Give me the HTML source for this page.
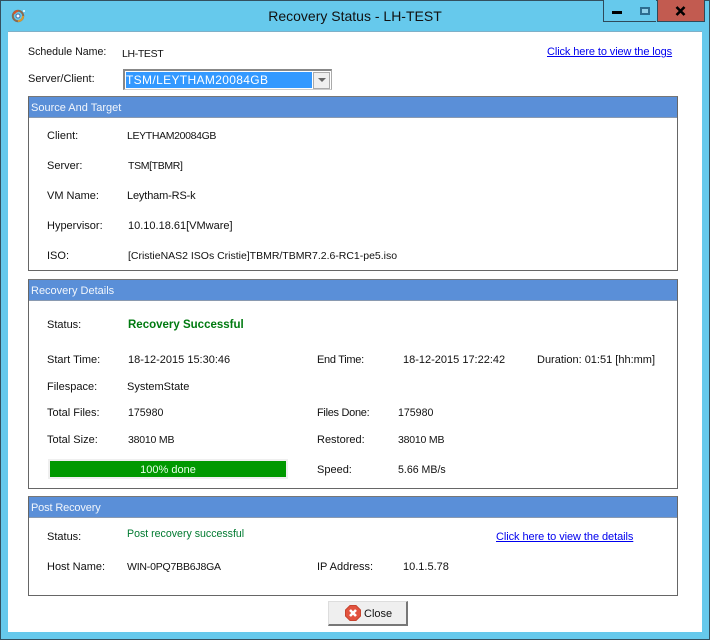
<!DOCTYPE html>
<html>
<head>
<meta charset="utf-8">
<style>
html,body{margin:0;padding:0;width:710px;height:640px;overflow:hidden;background:#66c9ec}
body{position:relative;font-family:"Liberation Sans",sans-serif;font-size:11px;color:#111}
.t{position:absolute;line-height:14px;white-space:nowrap}
.n{font-size:10.5px;letter-spacing:-.35px}
.box{position:absolute;left:28px;width:648px;border:1px solid #666;border-top:1px solid #777;background:#fff}
.hd{position:absolute;left:0;top:0;right:0;height:20px;background:#5a8fd8;border-bottom:1px solid #8a9ab0;color:#f2f6fc;line-height:22px;padding-left:2px}
a{color:#0000ee;text-decoration:underline}
</style>
</head>
<body>
<div style="position:absolute;left:0;top:0;width:710px;height:640px;box-sizing:border-box;border:1px solid #33505f"></div>
<div style="position:absolute;left:8px;top:31px;width:694px;height:600px;background:#fff;border-top:1px solid #7fb0c8"></div>

<svg style="position:absolute;left:11px;top:8px" width="16" height="16" viewBox="0 0 16 16">
<circle cx="7" cy="8" r="5.2" fill="none" stroke="#8a6a50" stroke-width="2"/>
<path d="M3 6A5 5 0 0 1 7 3" fill="none" stroke="#d8552a" stroke-width="2"/>
<path d="M7 13A5 5 0 0 0 12 8" fill="none" stroke="#d89a30" stroke-width="2"/>
<circle cx="7" cy="8" r="2" fill="#fff" stroke="#4a6fa8"/>
<circle cx="13" cy="3" r="1" fill="#fff"/>
</svg>
<div class="t" style="left:0;width:710px;top:7px;line-height:18px;text-align:center;font-size:14px;color:#111;">Recovery Status - LH-TEST</div>

<!-- window buttons -->
<div style="position:absolute;left:603px;top:0;width:27px;height:21px;border:1px solid #2e4a5a;border-top:0;background:#66c9ec"></div>
<div style="position:absolute;left:612px;top:11px;width:10px;height:3px;background:#000"></div>
<div style="position:absolute;left:631px;top:0;width:25px;height:21px;border-bottom:1px solid #2e4a5a;background:#66c9ec"></div>
<div style="position:absolute;left:640px;top:7px;width:10px;height:8px;box-sizing:border-box;border:2px solid #2d6d90;background:#8fd0ea"></div>
<div style="position:absolute;left:657px;top:0;width:46px;height:21px;box-sizing:content-box;border:1px solid #2e4a5a;border-top:0;background:#c25b50"></div>
<svg style="position:absolute;left:675px;top:6px" width="11" height="10" viewBox="0 0 11 10"><path d="M1.5 1L9.5 9M9.5 1L1.5 9" stroke="#000" stroke-width="2.6"/></svg>

<div class="t" style="left:28px;top:45px;font-size:10.6px">Schedule Name:</div>
<div class="t n" style="left:122px;top:47px">LH-TEST</div>
<a class="t" style="left:547px;top:45px;letter-spacing:-.1px">Click here to view the logs</a>
<div class="t" style="left:28px;top:72px">Server/Client:</div>

<!-- combo -->
<div style="position:absolute;left:123px;top:69px;width:209px;height:21px;box-sizing:border-box;border:1px solid #777;border-top:2px solid #888;border-left:2px solid #888;border-right-color:#aaa;border-bottom-color:#ccc;background:#fff"></div>
<div class="t" style="left:126px;top:72px;width:186px;height:16px;line-height:16px;background:#3399ff;color:#fff;font-size:12px;letter-spacing:.35px">TSM/LEYTHAM20084GB</div>
<div style="position:absolute;left:313px;top:72px;width:17px;height:17px;box-sizing:border-box;border:1px solid #aaa;background:#efefef"></div>
<div style="position:absolute;left:318px;top:78px;width:0;height:0;border-left:4px solid transparent;border-right:4px solid transparent;border-top:4px solid #666"></div>

<!-- Source -->
<div class="box" style="top:96px;height:173px"><div class="hd">Source And Target</div></div>
<div class="t" style="left:47px;top:129px">Client:</div><div class="t n" style="left:127px;top:129px">LEYTHAM20084GB</div>
<div class="t" style="left:47px;top:159px">Server:</div><div class="t n" style="left:128px;top:159px">TSM[TBMR]</div>
<div class="t" style="left:47px;top:189px">VM Name:</div><div class="t" style="left:127px;top:189px;letter-spacing:-.15px">Leytham-RS-k</div>
<div class="t" style="left:47px;top:219px">Hypervisor:</div><div class="t" style="left:128px;top:219px">10.10.18.61[VMware]</div>
<div class="t" style="left:47px;top:249px">ISO:</div><div class="t" style="left:128px;top:249px;font-size:10.5px;letter-spacing:-.01px">[CristieNAS2 ISOs Cristie]TBMR/TBMR7.2.6-RC1-pe5.iso</div>

<!-- Recovery -->
<div class="box" style="top:279px;height:208px"><div class="hd">Recovery Details</div></div>
<div class="t" style="left:47px;top:318px">Status:</div>
<div class="t" style="left:128px;top:318px;font-weight:bold;color:#007a10;font-size:11.5px">Recovery Successful</div>
<div class="t" style="left:47px;top:353px">Start Time:</div><div class="t" style="left:128px;top:353px">18-12-2015 15:30:46</div>
<div class="t" style="left:317px;top:353px;letter-spacing:-.3px">End Time:</div><div class="t" style="left:403px;top:353px">18-12-2015 17:22:42</div>
<div class="t" style="left:537px;top:353px">Duration: 01:51 [hh:mm]</div>
<div class="t" style="left:47px;top:380px">Filespace:</div><div class="t" style="left:127px;top:380px">SystemState</div>
<div class="t" style="left:47px;top:406px">Total Files:</div><div class="t" style="left:128px;top:406px;font-size:10.6px">175980</div>
<div class="t" style="left:317px;top:406px;letter-spacing:-.3px">Files Done:</div><div class="t" style="left:398px;top:406px;font-size:10.6px">175980</div>
<div class="t" style="left:47px;top:433px">Total Size:</div><div class="t n" style="left:128px;top:433px;letter-spacing:-.2px">38010 MB</div>
<div class="t" style="left:317px;top:433px">Restored:</div><div class="t n" style="left:398px;top:433px;letter-spacing:-.2px">38010 MB</div>
<div style="position:absolute;left:48px;top:459px;width:240px;height:20px;background:#efefef"></div>
<div class="t" style="left:50px;top:461px;width:236px;height:16px;line-height:16px;background:#009900;color:#e8ffe8;text-align:center"><span style="position:relative;top:1px">100% done</span></div>
<div class="t" style="left:317px;top:463px">Speed:</div><div class="t" style="left:398px;top:463px;font-size:10.6px">5.66 MB/s</div>

<!-- Post -->
<div class="box" style="top:496px;height:98px"><div class="hd" style="letter-spacing:-.15px">Post Recovery</div></div>
<div class="t" style="left:47px;top:530px">Status:</div>
<div class="t" style="left:127px;top:527px;color:#007a30;font-size:10.6px">Post recovery successful</div>
<a class="t" style="left:496px;top:530px;letter-spacing:-.07px">Click here to view the details</a>
<div class="t" style="left:47px;top:560px">Host Name:</div><div class="t n" style="left:127px;top:560px;letter-spacing:-.2px">WIN-0PQ7BB6J8GA</div>
<div class="t" style="left:317px;top:560px">IP Address:</div><div class="t" style="left:403px;top:560px">10.1.5.78</div>

<!-- Close -->
<div style="position:absolute;left:328px;top:601px;width:80px;height:25px;box-sizing:border-box;background:#efefef;border:1px solid #ddd;border-right:2px solid #777;border-bottom:2px solid #777"></div>
<svg style="position:absolute;left:345px;top:605px" width="16" height="16" viewBox="0 0 16 16">
<path d="M5 0.5H11L15.5 5V11L11 15.5H5L0.5 11V5Z" fill="#e2533f" stroke="#c8442f"/>
<path d="M5 5L11 11M11 5L5 11" stroke="#fff" stroke-width="2.6"/>
</svg>
<div class="t" style="left:364px;top:607px">Close</div>
</body>
</html>
